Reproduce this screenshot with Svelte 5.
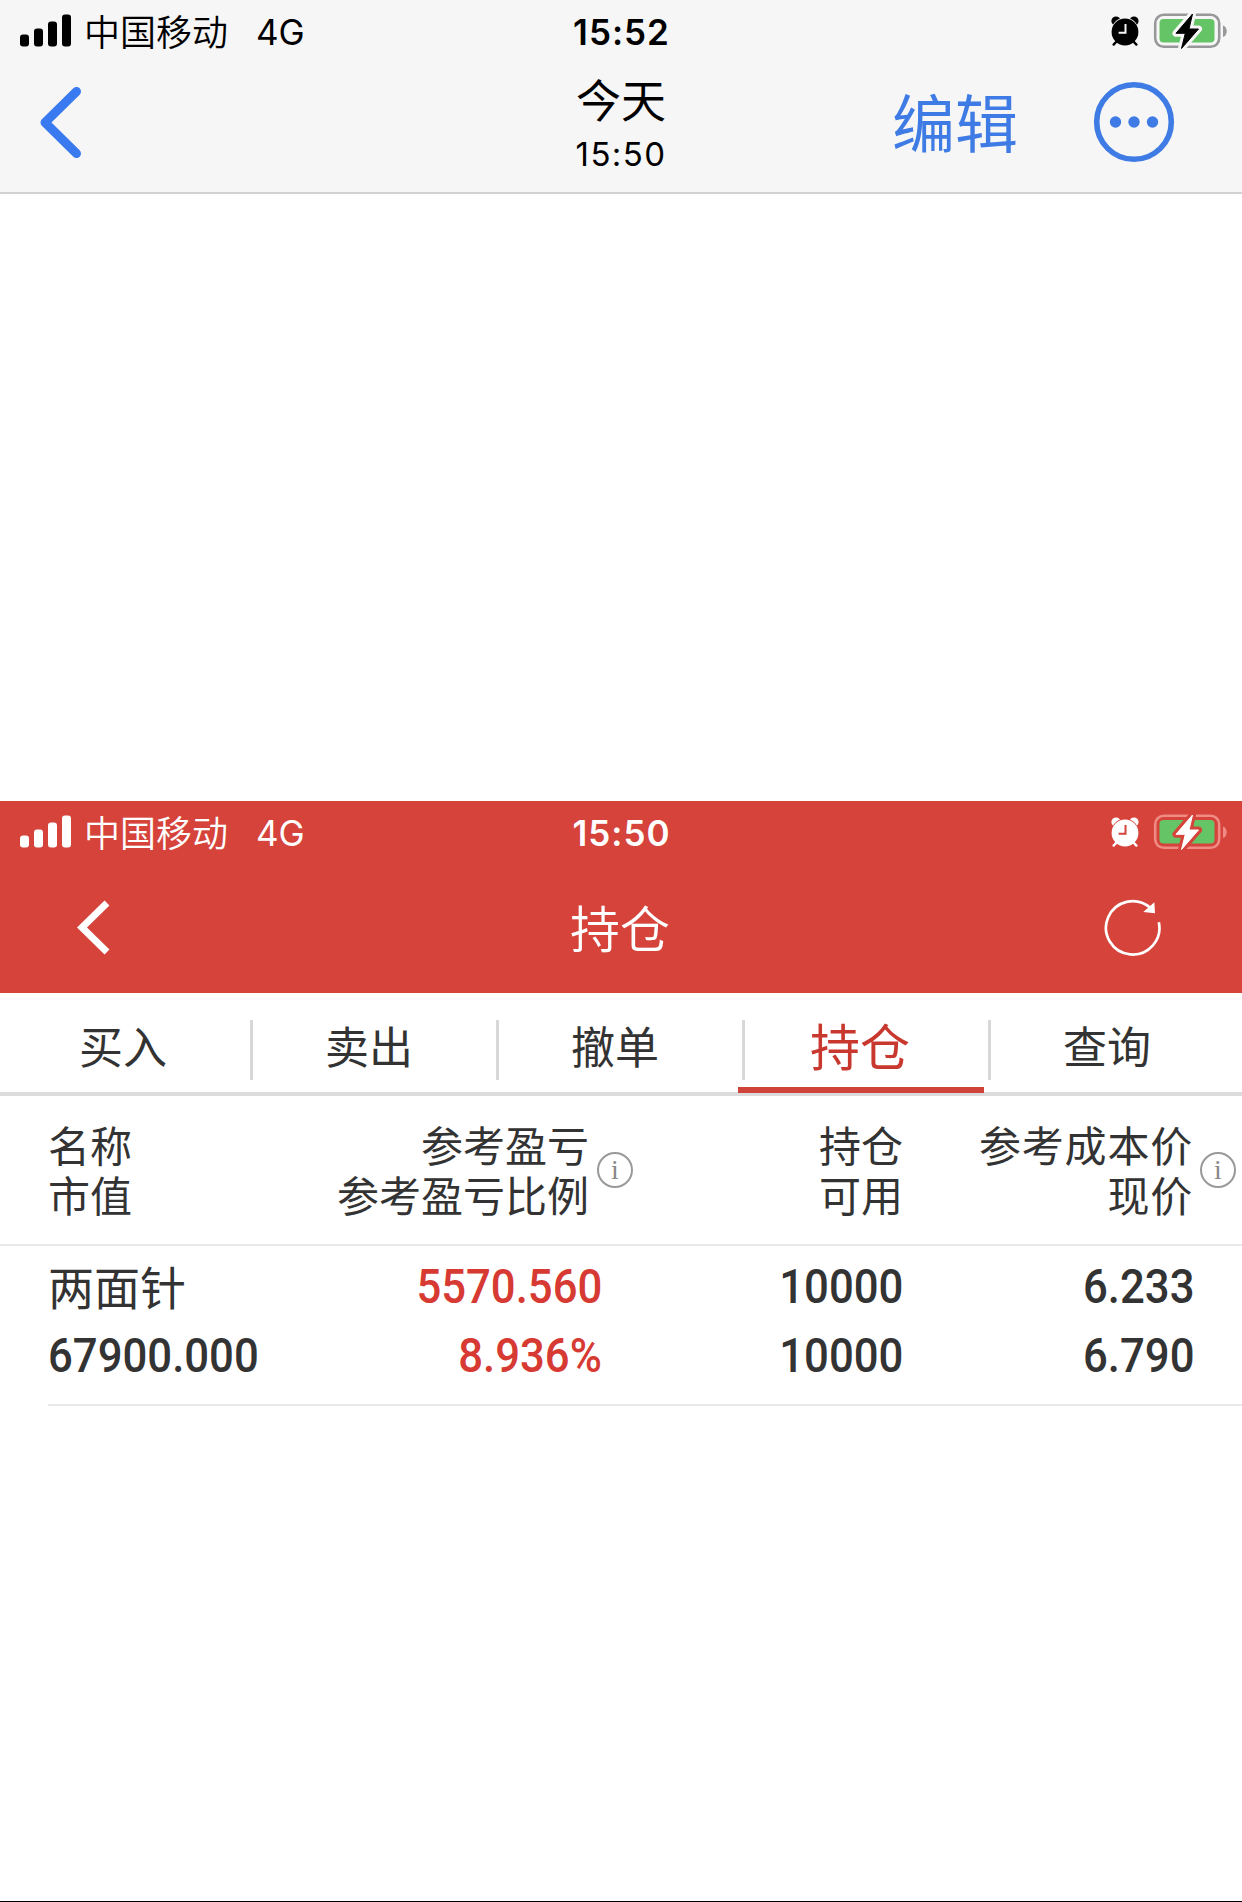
<script>
	const tabs = ['买入', '卖出', '撤单', '持仓', '查询'];
	const active = '持仓';

	const columns = [
		{ lines: ['名称', '市值'], key: 'name' },
		{ lines: ['参考盈亏', '参考盈亏比例'], key: 'profit', info: true },
		{ lines: ['持仓', '可用'], key: 'amount' },
		{ lines: ['参考成本价', '现价'], key: 'price', info: true }
	];

	const holdings = [
		{
			name: '两面针',
			value: '67900.000',
			profit: '5570.560',
			ratio: '8.936%',
			amount: '10000',
			usable: '10000',
			cost: '6.233',
			price: '6.790'
		}
	];
</script>

{#snippet statusBar(time)}
	<div class="status">
		<div class="carrier">
			<svg class="signal" width="52" height="34" viewBox="0 0 52 34">
				<rect x="0" y="20.5" width="9" height="12" rx="3" />
				<rect x="14" y="14.5" width="9" height="18" rx="3" />
				<rect x="28" y="7.5" width="9" height="25" rx="3" />
				<rect x="42" y="0.5" width="9" height="32" rx="3" />
			</svg>
			<span class="operator">中国移动</span>
			<span class="network">4G</span>
		</div>
		<time>{time}</time>
		<div class="indicators">
			<svg width="28" height="32" viewBox="0 0 28 32">
				<g fill="currentColor">
					<circle cx="5" cy="6" r="4.6" />
					<circle cx="23" cy="6" r="4.6" />
				</g>
				<circle class="knockout" cx="14" cy="17" r="14.2" />
				<path d="M6 26 2.6 29.6M22 26l3.4 3.6" stroke="currentColor" stroke-width="2.4" stroke-linecap="round" />
				<circle cx="14" cy="17" r="13.4" fill="currentColor" />
				<path class="hands" d="M14.5 9v8.8H7.6" />
			</svg>
			<svg class="battery" width="76" height="40" viewBox="0 0 76 40">
				<rect class="shell" x="2.2" y="3.8" width="64" height="32" rx="8.5" />
				<path class="nub" d="M70 14.5c5 1.5 5 10 0 11.5z" />
				<rect x="6.5" y="8" width="55" height="23.5" rx="4" fill="#65c466" />
				<path class="bolt-edge" d="M39.5 3 23 22.3h9.3L28.5 37.5 45.5 18H36z" />
				<path class="bolt" d="M39.5 3 23 22.3h9.3L28.5 37.5 45.5 18H36z" />
			</svg>
		</div>
	</div>
{/snippet}

<main>
	<header class="photos">
		{@render statusBar('15:52')}
		<nav>
			<svg class="back" width="50" height="80" viewBox="0 0 50 80">
				<path d="M41.5 9.5 10 40.5l31.5 31" fill="none" stroke="currentColor" stroke-width="9" stroke-linecap="round" stroke-linejoin="round" />
			</svg>
			<div class="date">
				<h1>今天</h1>
				<p>15:50</p>
			</div>
			<div class="actions">
				<span class="edit">编辑</span>
				<svg width="82" height="82" viewBox="0 0 82 82">
					<circle cx="41" cy="41" r="37.3" fill="none" stroke="currentColor" stroke-width="5.6" />
					<g fill="currentColor">
						<circle cx="22.5" cy="41" r="5.7" />
						<circle cx="41" cy="41" r="5.7" />
						<circle cx="59.5" cy="41" r="5.7" />
					</g>
				</svg>
			</div>
		</nav>
	</header>

	<section class="trade">
		<header class="red">
			{@render statusBar('15:50')}
			<nav>
				<svg class="back" width="40" height="60" viewBox="0 0 40 60">
					<path d="M35 5 10 29.500 35 54" fill="none" stroke="currentColor" stroke-width="7" />
				</svg>
				<h2>持仓</h2>
				<svg class="refresh" width="60" height="60" viewBox="0 0 60 60">
					<path d="M55.8 24.2A26.7 26.7 0 1 1 47 9.500" fill="none" stroke="currentColor" stroke-width="2.7" />
					<path d="M51.3 4.2 52 15.300 40.300 14z" fill="currentColor" />
				</svg>
			</nav>
		</header>

		<ul class="tabs">
			{#each tabs as tab}
				<li class:active={tab === active}>{tab}</li>
			{/each}
		</ul>

		<div class="row head">
			{#each columns as column}
				<div class="cell {column.key}">
					<div class="labels">
						{#each column.lines as line}
							<span>{line}</span>
						{/each}
					</div>
					{#if column.info}
						<i>i</i>
					{/if}
				</div>
			{/each}
		</div>

		{#each holdings as item}
			<div class="row item">
				<div class="cell name">
					<span class="stock">{item.name}</span>
					<span class="num">{item.value}</span>
				</div>
				<div class="cell profit">
					<span class="num">{item.profit}</span>
					<span class="num">{item.ratio}</span>
				</div>
				<div class="cell amount">
					<span class="num">{item.amount}</span>
					<span class="num">{item.usable}</span>
				</div>
				<div class="cell price">
					<span class="num">{item.cost}</span>
					<span class="num">{item.price}</span>
				</div>
			</div>
		{/each}
	</section>
</main>

<style>
	:global(body) {
		background: #fff;
	}

	main {
		display: flex;
		flex-direction: column;
		box-sizing: border-box;
		width: 1242px;
		height: 1902px;
		overflow: hidden;
		background: #fff;
		border-bottom: 1px solid #000;
		font-family: Inter, 'Noto Sans CJK SC', sans-serif;
		color: #333;
	}

	h1,
	h2,
	p,
	ul {
		margin: 0;
		padding: 0;
		font-weight: 400;
	}

	svg {
		display: block;
		flex: none;
	}

	.photos {
		--bar: #f6f6f6;
		--shell: #98989b;
		box-sizing: border-box;
		height: 194px;
		margin-bottom: 607px;
		background: var(--bar);
		border-bottom: 2px solid #d2d2d2;
		color: #000;
	}

	.red {
		--bar: #d5433b;
		--shell: #f08a84;
		height: 192px;
		background: var(--bar);
		color: #fff;
	}

	/* status bar */
	.status {
		display: grid;
		grid-template-columns: 1fr auto 1fr;
		align-items: center;
		height: 62px;
		padding: 0 13px 0 20px;
	}

	.carrier {
		display: flex;
		align-items: center;
	}

	.signal {
		fill: currentColor;
		margin-right: 12px;
	}

	.operator {
		width: 172px;
		padding-top: 4px;
		font-size: 36px;
		font-weight: 350;
		line-height: 58px;
	}

	.network {
		padding-top: 1px;
		font-size: 35px;
		line-height: 60px;
	}

	time {
		margin-right: 6px;
		padding-top: 1px;
		font-size: 35px;
		font-weight: 600;
		letter-spacing: 1px;
		line-height: 60px;
	}

	.indicators {
		display: flex;
		align-items: center;
		justify-content: flex-end;
		gap: 14px;
	}

	.knockout {
		fill: var(--bar);
	}

	.hands {
		fill: none;
		stroke: var(--bar);
		stroke-width: 2;
	}

	.shell {
		fill: none;
		stroke: var(--shell);
		stroke-width: 2.6;
	}

	.nub {
		fill: var(--shell);
	}

	.bolt-edge {
		fill: none;
		stroke: var(--bar);
		stroke-width: 7;
		stroke-linejoin: round;
	}

	.bolt {
		fill: currentColor;
		stroke: currentColor;
		stroke-width: 1;
		stroke-linejoin: round;
	}

	/* nav bars */
	nav {
		display: grid;
		grid-template-columns: 1fr auto 1fr;
		align-items: center;
	}

	.photos nav {
		height: 120px;
	}

	.photos .back {
		margin-left: 35px;
		color: #3a7af0;
	}

	.date {
		padding-top: 11px;
		text-align: center;
		line-height: 52px;
	}

	h1 {
		font-size: 45px;
	}

	p {
		font-size: 33px;
		letter-spacing: 1.4px;
	}

	.actions {
		display: flex;
		align-items: center;
		justify-content: flex-end;
		gap: 75px;
		padding-right: 67px;
		color: #3f7be4;
	}

	.edit {
		padding-top: 4px;
		font-size: 63px;
		line-height: 80px;
	}

	.red nav {
		height: 130px;
	}

	.red .back {
		margin-left: 72px;
	}

	h2 {
		padding-top: 4px;
		margin-right: 2px;
		font-size: 50px;
		font-weight: 350;
		line-height: 60px;
	}

	.refresh {
		justify-self: end;
		margin-right: 79px;
	}

	/* tabs */
	.tabs {
		display: flex;
		height: 99px;
		list-style: none;
		border-bottom: 4px solid #dcdcdc;
	}

	li {
		box-sizing: border-box;
		width: 246px;
		font-size: 44px;
		line-height: 110px;
		text-align: center;
	}

	li + li {
		background: linear-gradient(#d8d8d8, #d8d8d8) 4px 27px / 3px 60px no-repeat;
	}

	li.active {
		height: 100px;
		padding-right: 2px;
		border-bottom: 6px solid #d0433a;
		font-size: 50px;
		color: #c8382f;
	}

	/* table */
	.row {
		display: grid;
		grid-template-columns: 250px 340px 265px 1fr;
		margin-left: 48px;
	}

	.head {
		height: 148px;
		margin-left: 0;
		padding-left: 48px;
		border-bottom: 2px solid #e8e8e8;
		font-size: 42px;
		line-height: 50px;
	}

	.head .cell {
		display: flex;
		align-items: center;
		gap: 8px;
	}

	.labels {
		display: flex;
		flex-direction: column;
		padding-top: 4px;
	}

	.head .cell:not(.name) {
		justify-content: flex-end;
		text-align: right;
	}

	.head .profit {
		padding-right: 5px;
	}

	.head .price {
		padding-right: 6px;
		gap: 7px;
		letter-spacing: 0.8px;
	}

	i {
		box-sizing: border-box;
		width: 36px;
		height: 36px;
		border: 2px solid #999;
		border-radius: 50%;
		font: 28px/32px 'Liberation Serif', serif;
		letter-spacing: 0;
		text-align: center;
		color: #888;
	}

	.item {
		height: 158px;
		border-bottom: 2px solid #e8e8e8;
	}

	.item .cell {
		display: flex;
		flex-direction: column;
		align-items: flex-end;
		padding-top: 6px;
	}

	.item .name {
		align-items: flex-start;
	}

	.stock {
		height: 69px;
		font-size: 46px;
		line-height: 73px;
	}

	.num {
		font: 500 48px/69px Roboto, sans-serif;
		transform: scaleX(0.91);
		transform-origin: right;
	}

	.name .num {
		transform-origin: left;
	}

	.item .profit {
		padding-right: 36px;
		color: #d63a33;
	}

	.item .price {
		padding-right: 48px;
	}
</style>
